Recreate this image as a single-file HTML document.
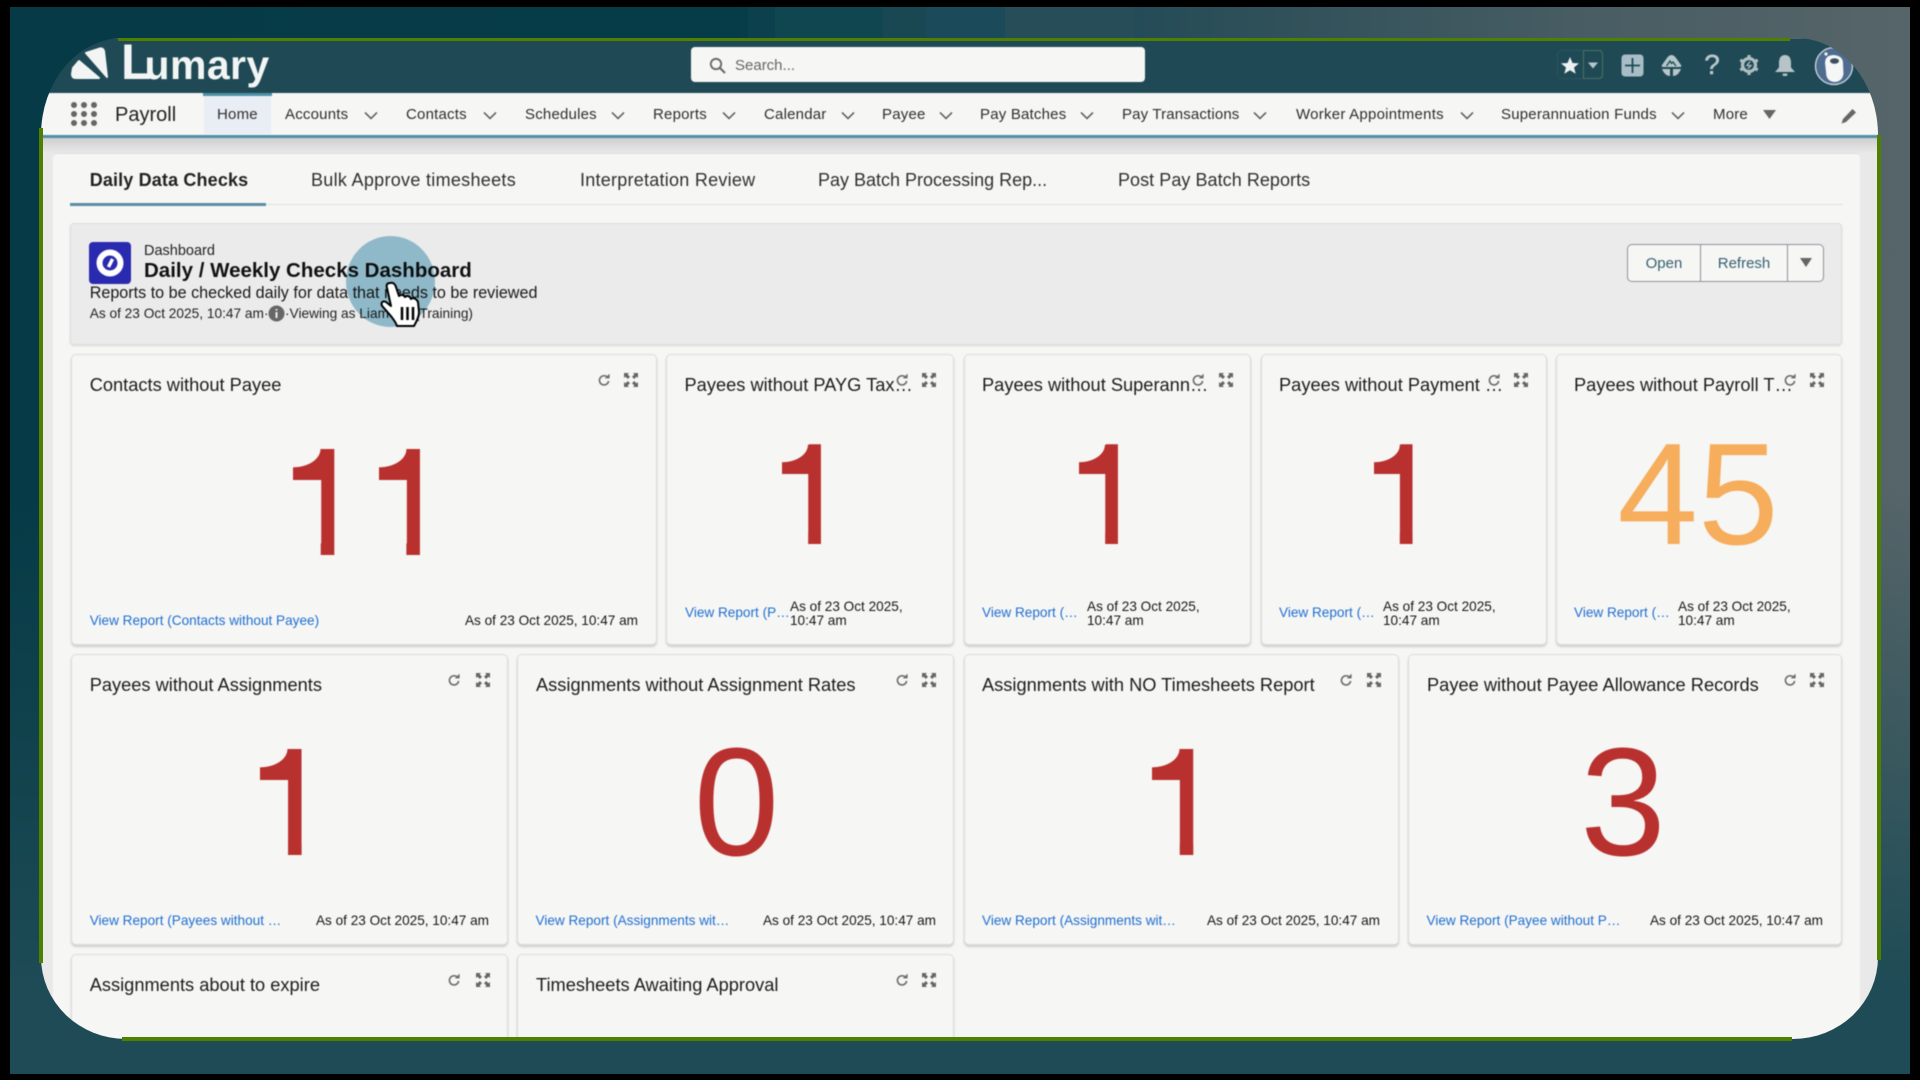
<!DOCTYPE html>
<html lang="en">
<head>
<meta charset="utf-8">
<title>Payroll</title>
<style>
html,body{margin:0;padding:0;width:1920px;height:1080px;overflow:hidden;background:#000;font-family:"Liberation Sans",sans-serif;color:#181818}
#bg{position:absolute;left:10px;top:7px;width:1900px;height:1067px;background:
 linear-gradient(180deg,rgba(29,75,84,0) 45%,rgba(29,75,84,.55) 72%,#1e4b55 92%),
 linear-gradient(90deg,#053a46 0,#063c48 38%,#184757 52%,#2f5059 66%,#475c63 82%,#566569 100%)}
#bands{position:absolute;left:0;top:7px;width:1920px;height:31px;background:linear-gradient(90deg,transparent 748px,#0c404d 748px,#0c404d 775px,#104650 775px,#104650 883px,#194853 883px,#194853 926px,#1b4a5a 926px,#1b4a5a 1005px,#274d58 1005px,#274d58 1134px,transparent 1134px)}
#f{position:absolute;left:0;top:0;width:1920px;height:1080px;background:#e9e9ea;clip-path:inset(38px 42px 41px 41px round 82px 82px 85px 85px / 97px 97px 82px 82px);filter:blur(.45px)}
.a{position:absolute}
.t{position:absolute;white-space:nowrap;line-height:20px;height:20px}
.n{font-size:15px;letter-spacing:.2px;color:#2e2e2e;top:105px}
.tab{font-size:18px;color:#303030;top:170px}
.c{position:absolute;background:#f6f6f5;border:1px solid #dcdcde;border-radius:5px;box-sizing:border-box;box-shadow:0 2px 2px rgba(0,0,0,.16)}
.h{font-size:18.25px;color:#1c1c1c;margin-top:1px}
.l{font-size:13.6px;color:#1f6fd0}
.d{font-size:13.6px;color:#181818}
.d2{font-size:13.6px;line-height:14px;color:#181818;height:auto;white-space:pre}
.b{position:absolute;text-align:center;line-height:1;color:#b9312e;white-space:nowrap}
.big{font-size:154px;height:154px}
.sm{font-size:145px;height:145px}
.o{color:#f6ad5c}
.one{position:relative;display:inline-block;width:.5562em}
.one b{font-weight:400;display:block;clip-path:inset(0 .2164em 0 .2515em)}
.one i{position:absolute;left:.0715em;top:.1585em;width:.195em;height:.2em;background:radial-gradient(.18em .12em at 0 0,transparent 98%,#b9312e 100%)}
svg{position:absolute;overflow:visible}
</style>
</head>
<body>
<div id="bg"></div>
<div id="bands"></div>
<svg width="0" height="0" style="position:absolute">
<symbol id="rf" viewBox="0 0 12 12"><path d="M9.4 3.2A4.6 4.6 0 1 0 10.6 7" fill="none" stroke="#6b6b6b" stroke-width="1.6"/><path d="M6.8 4.4H11.6V-.4z" fill="#6b6b6b"/></symbol>
<symbol id="ex" viewBox="0 0 14 14"><g fill="#666"><path d="M0 0h5L3.6 1.4 6 3.8 3.8 6 1.4 3.6 0 5z"/><path d="M14 0H9l1.4 1.4L8 3.8 10.2 6l2.4-2.4L14 5z"/><path d="M0 14h5l-1.4-1.4L6 10.2 3.8 8l-2.4 2.4L0 9z"/><path d="M14 14H9l1.4-1.4L8 10.2 10.2 8l2.4 2.4L14 9z"/></g></symbol>
<symbol id="ch" viewBox="0 0 14 9"><path d="M1 1.5 7 7.5 13 1.5" fill="none" stroke="#555" stroke-width="1.5"/></symbol>
</svg>
<div id="f">
 <!-- header -->
 <div class="a" style="left:0;top:38px;width:1920px;height:55px;background:#1f4a55"></div>
 <svg style="left:70px;top:46px" width="40" height="34" viewBox="0 0 40 34"><path d="M16 7 30 2.500Q33 2 34 5L37 31 16 7Z" fill="#f3f5f5" stroke="#f3f5f5" stroke-width="2" stroke-linejoin="round"/><path d="M3 22 9 15 29 32H6Q2 32 2 28Z" fill="#f3f5f5" stroke="#f3f5f5" stroke-width="2" stroke-linejoin="round"/></svg>
 <div class="t" style="left:121px;top:42px;font-size:41px;line-height:40px;height:40px;font-weight:700;color:#f3f5f5;letter-spacing:.4px"><span style="font-size:50px;letter-spacing:-7px">L</span>umary</div>
 <div class="a" style="left:691px;top:47px;width:454px;height:35px;background:#f6f6f5;border-radius:4px"></div>
 <svg style="left:709px;top:57px" width="17" height="17" viewBox="0 0 17 17"><circle cx="7" cy="7" r="5.2" fill="none" stroke="#666" stroke-width="1.8"/><path d="M11 11l5 5" stroke="#666" stroke-width="2"/></svg>
 <div class="t" style="left:735px;top:56px;font-size:15px;color:#666">Search...</div>

 <!-- favourites -->
 <svg style="left:1557px;top:50px" width="47" height="30" viewBox="0 0 47 30"><rect x=".5" y=".5" width="45" height="28" rx="4" fill="none" stroke="#2a545c"/><path d="M26.500 .5H41.500Q45.500 .5 45.500 4.500V24.500Q45.500 28.500 41.500 28.500H26.500Z" fill="none" stroke="#47735f"/><path d="M13 7l2.500 6 6.500.4-5 4.100 1.700 6.300-5.700-3.500-5.700 3.500 1.700-6.300-5-4.100 6.500-.4z" fill="#eef1f1"/><path d="M31 12.500h10l-5 6z" fill="#b9c7cb"/></svg>
 <svg style="left:1621px;top:54px" width="23" height="23" viewBox="0 0 23 23"><rect x=".5" y=".5" width="22" height="22" rx="3.500" fill="#a9bdc7"/><path d="M11.500 4v15M4 11.500h15" stroke="#1f4a55" stroke-width="1.800"/></svg>
 <svg style="left:1660px;top:54px" width="23" height="23" viewBox="0 0 23 23"><path d="M11.500 1Q14 1 16 4L21 11Q22 13 20 13H3Q1 13 2 11L7 4Q9 1 11.500 1Z" fill="#b6c6ca"/><path d="M2 15H10V22Q5 22 2 15ZM13 15H21Q18 22 13 22Z" fill="#b6c6ca"/><path d="M6.500 12l3.500-5 1.500 2.500 1.500-1.500 3 4" fill="none" stroke="#1f4a55" stroke-width="1.300"/></svg>
 <div class="t" style="left:1702px;top:51px;font-size:28px;line-height:28px;height:28px;color:#bcc8cb;width:20px;text-align:center;-webkit-text-stroke:.5px #bcc8cb">?</div>
 <svg style="left:1739px;top:55px" width="20" height="20" viewBox="0 0 20 20"><circle cx="10" cy="10" r="6.500" fill="none" stroke="#b0bec2" stroke-width="3.200"/><path d="M10 0v4M10 16v4M1.300 5l3.400 2M15.300 13l3.400 2M1.300 15l3.400-2M15.300 7l3.400-2" stroke="#b0bec2" stroke-width="3.200"/><path d="M11 6.500 8 10.500h4l-3 3" fill="none" stroke="#b0bec2" stroke-width="1.300"/></svg>
 <svg style="left:1774px;top:54px" width="22" height="23" viewBox="0 0 22 23"><path d="M11 1Q16.500 1 17 8V13.500L21 18H1L5 13.500V8Q5.500 1 11 1Z" fill="#b6c4c8"/><rect x="8.500" y="19.500" width="5" height="2.500" rx="1.200" fill="#b6c4c8"/></svg>
 <svg style="left:1814px;top:46px" width="40" height="40" viewBox="0 0 40 40"><circle cx="20" cy="20" r="18.500" fill="#4e6b90" stroke="#d0d9de" stroke-width="1.300"/><path d="M11 17Q11 9 20 9 29 10 29 17L29.500 28Q28 36 20 36 12 35 12 26Z" fill="#f5f6f6"/><ellipse cx="20.500" cy="15" rx="4.500" ry="2.800" fill="#3b4f60"/><circle cx="12" cy="8" r="1.600" fill="#f5f6f6"/></svg>

 <!-- nav -->
 <div class="a" style="left:0;top:93px;width:1920px;height:42px;background:#f6f6f5"></div>
 <div class="a" style="left:0;top:135px;width:1920px;height:3px;background:#5090a8"></div>
 <div class="a" style="left:0;top:138px;width:1920px;height:15px;background:linear-gradient(#cfcfcf,#e9e9ea)"></div>
 <div class="a" style="left:204px;top:93px;width:67px;height:41px;background:#e9edf4"></div>
 <div class="a" style="left:203px;top:93px;width:69px;height:3px;background:#5090a8"></div>
 <svg style="left:71px;top:102px" width="26" height="24" viewBox="0 0 26 24"><g fill="#666"><circle cx="3" cy="3" r="3"/><circle cx="13" cy="3" r="3"/><circle cx="23" cy="3" r="3"/><circle cx="3" cy="12" r="3"/><circle cx="13" cy="12" r="3"/><circle cx="23" cy="12" r="3"/><circle cx="3" cy="21" r="3"/><circle cx="13" cy="21" r="3"/><circle cx="23" cy="21" r="3"/></g></svg>
 <div class="t" style="left:115px;top:105px;font-size:20px;color:#222">Payroll</div>
 <div class="t n" style="left:217px">Home</div>
 <div class="t n" style="left:285px">Accounts</div><svg style="left:364px;top:111px" width="14" height="9"><use href="#ch"/></svg>
 <div class="t n" style="left:406px">Contacts</div><svg style="left:483px;top:111px" width="14" height="9"><use href="#ch"/></svg>
 <div class="t n" style="left:525px">Schedules</div><svg style="left:611px;top:111px" width="14" height="9"><use href="#ch"/></svg>
 <div class="t n" style="left:653px">Reports</div><svg style="left:722px;top:111px" width="14" height="9"><use href="#ch"/></svg>
 <div class="t n" style="left:764px">Calendar</div><svg style="left:841px;top:111px" width="14" height="9"><use href="#ch"/></svg>
 <div class="t n" style="left:882px">Payee</div><svg style="left:939px;top:111px" width="14" height="9"><use href="#ch"/></svg>
 <div class="t n" style="left:980px">Pay Batches</div><svg style="left:1080px;top:111px" width="14" height="9"><use href="#ch"/></svg>
 <div class="t n" style="left:1122px;letter-spacing:.15px">Pay Transactions</div><svg style="left:1253px;top:111px" width="14" height="9"><use href="#ch"/></svg>
 <div class="t n" style="left:1296px;letter-spacing:.25px">Worker Appointments</div><svg style="left:1460px;top:111px" width="14" height="9"><use href="#ch"/></svg>
 <div class="t n" style="left:1501px">Superannuation Funds</div><svg style="left:1671px;top:111px" width="14" height="9"><use href="#ch"/></svg>
 <div class="t n" style="left:1713px">More</div>
 <svg style="left:1763px;top:110px" width="13" height="9" viewBox="0 0 13 9"><path d="M0 0h13L6.500 9z" fill="#666"/></svg>
 <svg style="left:1841px;top:108px" width="16" height="16" viewBox="0 0 16 16"><path d="M11.500 1 15 4.500 5 14 .5 15.500 2 11z" fill="#666"/></svg>

 <!-- panel -->
 <div class="a" style="left:53px;top:153px;width:1807px;height:900px;background:#f6f6f5;border-top:1px solid #dedede;border-radius:4px;box-sizing:border-box"></div>
 <div class="a" style="left:70px;top:204px;width:1773px;height:1px;background:#dfdfdf"></div>
 <div class="a" style="left:70px;top:203px;width:196px;height:2.500px;background:#5a8ea3"></div>
 <div class="t tab" style="left:89.700px;font-weight:700;color:#222;letter-spacing:.15px">Daily Data Checks</div>
 <div class="t tab" style="left:311px;letter-spacing:.3px">Bulk Approve timesheets</div>
 <div class="t tab" style="left:580px;letter-spacing:.25px">Interpretation Review</div>
 <div class="t tab" style="left:818px">Pay Batch Processing Rep...</div>
 <div class="t tab" style="left:1118px;letter-spacing:.05px">Post Pay Batch Reports</div>

 <!-- dashboard header -->
 <div class="a" style="left:70px;top:223px;width:1772px;height:122px;background:#ebebec;border:1px solid #dedee0;border-radius:4px;box-sizing:border-box;box-shadow:0 1px 2px rgba(0,0,0,.12)"></div>
 <svg style="left:89px;top:242px" width="42" height="42" viewBox="0 0 42 42"><rect width="42" height="42" rx="4" fill="#2a2ab0"/><circle cx="21" cy="21" r="10.500" fill="none" stroke="#fff" stroke-width="6"/><path d="M19.500 25l4-8" stroke="#fff" stroke-width="3.500"/></svg>
 <div class="t" style="left:144px;top:241px;font-size:14.500px;color:#222">Dashboard</div>
 <div class="t" style="left:144px;top:261px;font-size:20.500px;font-weight:700;color:#111">Daily / Weekly Checks Dashboard</div>
 <div class="t" style="left:89.700px;top:283px;font-size:16.150px;color:#181818">Reports to be checked daily for data that needs to be reviewed</div>
 <div class="t" style="left:89.700px;top:304px;font-size:13.700px;color:#222">As of 23 Oct 2025, 10:47 am</div>
 <svg style="left:268px;top:305px" width="17" height="17" viewBox="0 0 17 17"><circle cx="8.500" cy="8.500" r="8" fill="#666"/><path d="M8.500 4v1.500M8.500 7v6" stroke="#eee" stroke-width="2"/></svg>
 <div class="t" style="left:264px;top:304px;font-size:13.700px;color:#222;width:4px">·</div>
 <div class="t" style="left:285px;top:304px;font-size:13.700px;color:#222">·Viewing as Liam</div>
 <div class="t" style="left:393px;width:80px;text-align:right;top:304px;font-size:13.700px;color:#222">(Training)</div>

 <div class="a" style="left:1627px;top:244px;width:197px;height:38px;background:#f6f6f5;border:1px solid #8f9496;border-radius:5px;box-sizing:border-box"></div>
 <div class="a" style="left:1700px;top:244px;width:1px;height:38px;background:#8f9496"></div>
 <div class="a" style="left:1787px;top:244px;width:1px;height:38px;background:#8f9496"></div>
 <div class="t" style="left:1628px;width:72px;text-align:center;top:254px;font-size:15px;color:#35606e">Open</div>
 <div class="t" style="left:1701px;width:86px;text-align:center;top:254px;font-size:15px;color:#35606e">Refresh</div>
 <svg style="left:1800px;top:258px" width="12" height="9" viewBox="0 0 12 9"><path d="M0 0h12L6 9z" fill="#666"/></svg>

 <!-- row 1 -->
 <div class="c" style="left:71px;top:354px;width:586px;height:291px"></div>
 <div class="c" style="left:666px;top:354px;width:288px;height:291px"></div>
 <div class="c" style="left:964px;top:354px;width:287px;height:291px"></div>
 <div class="c" style="left:1261px;top:354px;width:286px;height:291px"></div>
 <div class="c" style="left:1556px;top:354px;width:286px;height:291px"></div>

 <div class="t h" style="left:89.700px;top:374px">Contacts without Payee</div>
 <div class="t h" style="left:684.500px;top:374px">Payees without PAYG Tax…</div>
 <div class="t h" style="left:982px;top:374px">Payees without Superann…</div>
 <div class="t h" style="left:1279px;top:374px">Payees without Payment …</div>
 <div class="t h" style="left:1574px;top:374px">Payees without Payroll T…</div>

 <svg style="left:598px;top:374px" width="12" height="12"><use href="#rf"/></svg><svg style="left:624px;top:373px" width="14" height="14"><use href="#ex"/></svg>
 <svg style="left:896px;top:374px" width="12" height="12"><use href="#rf"/></svg><svg style="left:922px;top:373px" width="14" height="14"><use href="#ex"/></svg>
 <svg style="left:1192px;top:374px" width="12" height="12"><use href="#rf"/></svg><svg style="left:1219px;top:373px" width="14" height="14"><use href="#ex"/></svg>
 <svg style="left:1488px;top:374px" width="12" height="12"><use href="#rf"/></svg><svg style="left:1514px;top:373px" width="14" height="14"><use href="#ex"/></svg>
 <svg style="left:1784px;top:374px" width="12" height="12"><use href="#rf"/></svg><svg style="left:1810px;top:373px" width="14" height="14"><use href="#ex"/></svg>

 <div class="b big" style="left:282px;top:424.600px;letter-spacing:-1px"><span class="one"><b>1</b><i></i></span><span class="one"><b>1</b><i></i></span></div>
 <div class="b sm" style="left:771.700px;top:422.300px"><span class="one"><b>1</b><i></i></span></div>
 <div class="b sm" style="left:1068.700px;top:422.300px"><span class="one"><b>1</b><i></i></span></div>
 <div class="b sm" style="left:1363.300px;top:422.300px"><span class="one"><b>1</b><i></i></span></div>
 <div class="b sm o" style="left:1556px;width:284px;top:422.300px">45</div>

 <div class="t l" style="left:89.700px;top:611px">View Report (Contacts without Payee)</div>
 <div class="t d" style="left:437px;width:201px;text-align:right;top:611px">As of 23 Oct 2025, 10:47 am</div>
 <div class="t l" style="left:685px;top:603px">View Report (P…</div><div class="t d2" style="left:790px;top:600px">As of 23 Oct 2025,
10:47 am</div>
 <div class="t l" style="left:982px;top:603px">View Report (…</div><div class="t d2" style="left:1087px;top:600px">As of 23 Oct 2025,
10:47 am</div>
 <div class="t l" style="left:1279px;top:603px">View Report (…</div><div class="t d2" style="left:1383px;top:600px">As of 23 Oct 2025,
10:47 am</div>
 <div class="t l" style="left:1574px;top:603px">View Report (…</div><div class="t d2" style="left:1678px;top:600px">As of 23 Oct 2025,
10:47 am</div>

 <!-- row 2 -->
 <div class="c" style="left:71px;top:654px;width:437px;height:291px"></div>
 <div class="c" style="left:517px;top:654px;width:437px;height:291px"></div>
 <div class="c" style="left:964px;top:654px;width:435px;height:291px"></div>
 <div class="c" style="left:1408px;top:654px;width:434px;height:291px"></div>

 <div class="t h" style="left:89.700px;top:674px">Payees without Assignments</div>
 <div class="t h" style="left:536px;top:674px">Assignments without Assignment Rates</div>
 <div class="t h" style="left:982px;top:674px">Assignments with NO Timesheets Report</div>
 <div class="t h" style="left:1427px;top:674px">Payee without Payee Allowance Records</div>

 <svg style="left:448px;top:674px" width="12" height="12"><use href="#rf"/></svg><svg style="left:476px;top:673px" width="14" height="14"><use href="#ex"/></svg>
 <svg style="left:896px;top:674px" width="12" height="12"><use href="#rf"/></svg><svg style="left:922px;top:673px" width="14" height="14"><use href="#ex"/></svg>
 <svg style="left:1340px;top:674px" width="12" height="12"><use href="#rf"/></svg><svg style="left:1367px;top:673px" width="14" height="14"><use href="#ex"/></svg>
 <svg style="left:1784px;top:674px" width="12" height="12"><use href="#rf"/></svg><svg style="left:1810px;top:673px" width="14" height="14"><use href="#ex"/></svg>

 <div class="b big" style="left:249.300px;top:724.600px"><span class="one"><b>1</b><i></i></span></div>
 <div class="b big" style="left:518px;width:437px;top:724.600px">0</div>
 <div class="b big" style="left:1141px;top:724.600px"><span class="one"><b>1</b><i></i></span></div>
 <div class="b big" style="left:1406px;width:434px;top:724.600px">3</div>

 <div class="t l" style="left:89.700px;top:911px">View Report (Payees without …</div>
 <div class="t d" style="left:289px;width:200px;text-align:right;top:911px">As of 23 Oct 2025, 10:47 am</div>
 <div class="t l" style="left:535.500px;top:911px">View Report (Assignments wit…</div>
 <div class="t d" style="left:736px;width:200px;text-align:right;top:911px">As of 23 Oct 2025, 10:47 am</div>
 <div class="t l" style="left:982px;top:911px">View Report (Assignments wit…</div>
 <div class="t d" style="left:1180px;width:200px;text-align:right;top:911px">As of 23 Oct 2025, 10:47 am</div>
 <div class="t l" style="left:1426.500px;top:911px">View Report (Payee without P…</div>
 <div class="t d" style="left:1623px;width:200px;text-align:right;top:911px">As of 23 Oct 2025, 10:47 am</div>

 <!-- row 3 -->
 <div class="c" style="left:71px;top:954px;width:437px;height:120px"></div>
 <div class="c" style="left:517px;top:954px;width:437px;height:120px"></div>
 <div class="t h" style="left:89.700px;top:974px">Assignments about to expire</div>
 <div class="t h" style="left:536px;top:974px">Timesheets Awaiting Approval</div>
 <svg style="left:448px;top:974px" width="12" height="12"><use href="#rf"/></svg><svg style="left:476px;top:973px" width="14" height="14"><use href="#ex"/></svg>
 <svg style="left:896px;top:974px" width="12" height="12"><use href="#rf"/></svg><svg style="left:922px;top:973px" width="14" height="14"><use href="#ex"/></svg>

 <!-- cursor highlight -->
 <div class="a" style="left:346px;top:236px;width:89px;height:91px;border-radius:50%;background:#9bc9d9;mix-blend-mode:multiply"></div>
 <svg style="left:380px;top:282px" width="42" height="48" viewBox="0 0 42 48"><path d="M10 1C13 0 15 2 16 5L19 14C21 12 24 13 25 15C27 13 30 14 31 17C33 15 37 17 38 20L39 30C39 36 36 40 34 44L17 44C15 38 9 32 3 25C0 22 2 18 6 20L11 24L7 6C6 3 7 1 10 1Z" fill="#fff" stroke="#000" stroke-width="2" stroke-linejoin="round"/><path d="M22 25v13M27.500 25v13M33 25v13" stroke="#000" stroke-width="2.500"/></svg>
</div>
<!-- green outline segments -->
<div class="a" style="left:118px;top:38px;width:1672px;height:3px;background:#4f8000"></div>
<div class="a" style="left:39px;top:128px;width:4px;height:835px;background:#4f8000"></div>
<div class="a" style="left:1877px;top:135px;width:4px;height:825px;background:#4f8000"></div>
<div class="a" style="left:122px;top:1037px;width:1670px;height:4px;background:#4f8000"></div>
</body>
</html>
